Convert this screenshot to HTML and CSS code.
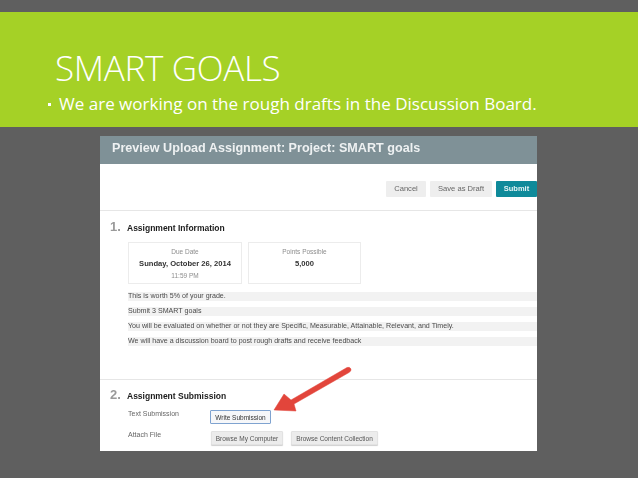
FILE: index.html
```html
<!DOCTYPE html>
<html lang="en">
<head>
<meta charset="utf-8">
<title>SMART Goals</title>
<link rel="stylesheet" href="styles.css">
</head>
<body>
<div class="slide">
  <header class="band">
    <h1 class="title">SMART GOALS</h1>
    <p class="bullet"><span class="dot"></span>We are working on the rough drafts in the Discussion Board.</p>
  </header>
  <main class="shot">
    <div class="shot-head">Preview Upload Assignment: Project: SMART goals</div>
    <div class="actions">
      <span class="btn">Cancel</span>
      <span class="btn draft">Save as Draft</span>
      <span class="btn submit">Submit</span>
    </div>
    <section class="sec first">
      <h2 class="sec-title"><span class="num">1.</span>Assignment Information</h2>
      <div class="cards">
        <div class="card"><span class="lab">Due Date</span><b class="val">Sunday, October 26, 2014</b><span class="lab">11:59 PM</span></div>
        <div class="card"><span class="lab">Points Possible</span><b class="val">5,000</b></div>
      </div>
      <ul class="rows">
        <li>This is worth 5% of your grade.</li>
        <li>Submit 3 SMART goals</li>
        <li>You will be evaluated on whether or not they are Specific, Measurable, Attainable, Relevant, and Timely.</li>
        <li>We will have a discussion board to post rough drafts and receive feedback</li>
      </ul>
    </section>
    <section class="sec second">
      <h2 class="sec-title"><span class="num">2.</span>Assignment Submission</h2>
      <div class="field one"><span class="f-lab">Text Submission</span><span class="fbtn write">Write Submission</span></div>
      <div class="field two"><span class="f-lab">Attach File</span><span class="fbtn">Browse My Computer</span><span class="fbtn">Browse Content Collection</span></div>
    </section>
    <svg class="arrow" width="90" height="60" viewBox="0 0 90 60" aria-hidden="true">
      <path d="M5 47 L15 31 L22 37 L78 4.5 Q81 3.5 82 6 Q82.5 8 80 9.5 L25 41 L27 48 Z" fill="#e2453b" stroke="#e2453b" stroke-width="0.5" stroke-linejoin="round"/>
    </svg>
  </main>
</div>
</body>
</html>
```
FILE: styles.css
```css
* { box-sizing: border-box; }
html, body { margin: 0; padding: 0; }
body { width: 638px; height: 478px; overflow: hidden; background: #5f5f5f; }
.slide { padding-top: 12px; display: flex; flex-direction: column; }
.band {
  height: 115px;
  background: #a5d126;
  color: #fff;
  font-family: "Open Sans", sans-serif;
  padding: 37px 0 0 48px;
}
.title {
  margin: 0 0 0 7px;
  font-size: 35px;
  line-height: 38px;
  font-weight: 300;
  letter-spacing: -0.3px;
}
.bullet {
  margin: 5px 0 0;
  font-size: 17.04px;
  line-height: 24px;
  font-weight: 400;
  display: flex;
  align-items: center;
  white-space: nowrap;
}
.dot { width: 3px; height: 3px; background: #fff; margin-right: 8px; }
.shot {
  position: relative;
  margin: 9px 0 0 100px;
  width: 437px;
  height: 315px;
  background: #fff;
  font-family: "Liberation Sans", sans-serif;
  overflow: hidden;
  filter: blur(0.4px);
}
.shot-head {
  height: 28px;
  background: #7f9197;
  color: #eef1f2;
  font-weight: 700;
  font-size: 12.6px;
  line-height: 24px;
  padding-left: 12px;
}
.actions {
  display: flex;
  justify-content: flex-end;
  gap: 4px;
  padding-top: 17px;
  height: 46px;
}
.btn {
  height: 16px;
  line-height: 16px;
  font-size: 7.6px;
  color: #666;
  background: #eeeeee;
  text-align: center;
  width: 40px;
  border-radius: 1px;
}
.btn.draft { width: 62px; }
.btn.submit { width: 41px; background: #0f8a9a; color: #e8f5f6; font-weight: 700; font-size: 7.5px; }
.sec { border-top: 1px solid #e6e6e6; }
.sec.first { height: 169px; padding-top: 9px; }
.sec.second { padding-top: 8px; }
.sec-title {
  margin: 0;
  padding-left: 10px;
  height: 15px;
  display: flex;
  align-items: baseline;
  font-size: 8.5px;
  line-height: 15px;
  font-weight: 700;
  color: #1c1c1c;
}
.num { width: 17px; font-size: 13px; line-height: 13px; color: #9a9a9a; }
.cards { display: flex; gap: 6px; margin: 7px 0 0 28px; }
.card {
  width: 114px;
  height: 42px;
  border: 1px solid #ececec;
  padding-top: 4px;
  display: flex;
  flex-direction: column;
  align-items: center;
  gap: 2px;
}
.card:last-child { width: 113px; }
.lab { font-size: 6.5px; line-height: 9px; color: #8d8d8d; }
.val { font-size: 7.6px; line-height: 11px; color: #333; }
.rows { list-style: none; margin: 8px 0 0 28px; padding: 0; display: flex; flex-direction: column; gap: 6px; }
.rows li {
  height: 9px;
  line-height: 9px;
  background: #f2f2f2;
  color: #4a4a4a;
  font-size: 7.1px;
  white-space: nowrap;
}
.field { display: flex; align-items: flex-start; margin-left: 28px; margin-top: 7px; height: 14px; }
.f-lab { width: 83px; font-size: 7px; line-height: 8px; color: #666; }
.fbtn {
  height: 14px;
  line-height: 13px;
  font-size: 6.5px;
  color: #555;
  background: #ececec;
  border: 1px solid #e2e2e2;
  box-shadow: 0 1px 1px #d0d0d0;
  border-radius: 1px;
  text-align: center;
  width: 72px;
  margin-right: 8px;
}
.fbtn + .fbtn { width: 87px; }
.write { width: 61px; margin-left: -1px; background: #f6f7f9; border-color: #7fa3d0; color: #333; box-shadow: none; }
.arrow { position: absolute; left: 169px; top: 227px; }
```
